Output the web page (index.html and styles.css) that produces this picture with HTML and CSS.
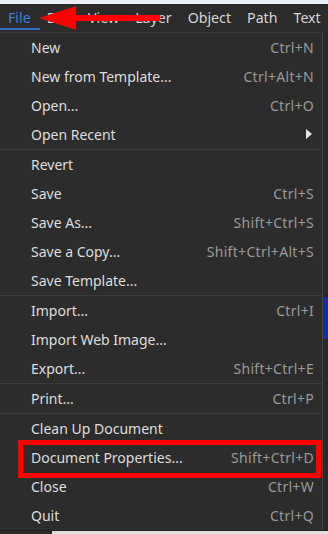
FILE: index.html
```html
<!DOCTYPE html>
<html lang="en">
<head>
  <meta charset="UTF-8">
  <title>File menu</title>
  <link rel="stylesheet" href="styles.css">
</head>
<body>
  <div class="window">
    <div class="top-strip"></div>

    <div class="menubar">
      <span class="menubar-item active">File</span>
      <span class="menubar-item">Edit</span>
      <span class="menubar-item">View</span>
      <span class="menubar-item">Layer</span>
      <span class="menubar-item">Object</span>
      <span class="menubar-item">Path</span>
      <span class="menubar-item">Text</span>
    </div>

    <div class="body-row">
      <ul class="menu">
        <li class="item"><span>New</span><span class="shortcut">Ctrl+N</span></li>
        <li class="item"><span>New from Template...</span><span class="shortcut">Ctrl+Alt+N</span></li>
        <li class="item"><span>Open...</span><span class="shortcut">Ctrl+O</span></li>
        <li class="item"><span>Open Recent</span><span class="submenu-arrow"></span></li>
        <li class="separator"></li>
        <li class="item"><span>Revert</span></li>
        <li class="item"><span>Save</span><span class="shortcut">Ctrl+S</span></li>
        <li class="item"><span>Save As...</span><span class="shortcut">Shift+Ctrl+S</span></li>
        <li class="item"><span>Save a Copy...</span><span class="shortcut">Shift+Ctrl+Alt+S</span></li>
        <li class="item"><span>Save Template...</span></li>
        <li class="separator"></li>
        <li class="item"><span>Import...</span><span class="shortcut">Ctrl+I</span></li>
        <li class="item"><span>Import Web Image...</span></li>
        <li class="item"><span>Export...</span><span class="shortcut">Shift+Ctrl+E</span></li>
        <li class="separator"></li>
        <li class="item"><span>Print...</span><span class="shortcut">Ctrl+P</span></li>
        <li class="separator"></li>
        <li class="item"><span>Clean Up Document</span></li>
        <li class="item"><span>Document Properties...</span><span class="shortcut">Shift+Ctrl+D</span></li>
        <li class="item"><span>Close</span><span class="shortcut">Ctrl+W</span></li>
        <li class="item"><span>Quit</span><span class="shortcut">Ctrl+Q</span></li>
      </ul>
      <div class="side-strip">
        <div class="side-blue"></div>
      </div>
    </div>

    <div class="bottom-strip">
      <div class="bottom-canvas"></div>
    </div>

    <!-- annotations drawn over the screenshot -->
    <svg class="arrow" width="130" height="28" viewBox="0 0 130 28">
      <polygon points="1,13 38,1 38,10 122,10 122,16 38,16 38,25" fill="#ff0000"/>
    </svg>
    <div class="highlight"></div>
  </div>
</body>
</html>
```

FILE: styles.css
```css
html {
  font-size: 14px;
}

body {
  margin: 0;
  background-color: #2b2b2b;
  font-family: 'Noto Sans', 'Open Sans', Arial, sans-serif;
  color: #dedede;
}

.window {
  position: relative;
  width: 328px;
  height: 534px;
  overflow: hidden;
  display: flex;
  flex-direction: column;
}

.top-strip {
  height: 4px;
  background-color: #e9eef2;
}

.menubar {
  height: 28px;
  display: flex;
  align-items: center;
  gap: 16px;
  padding-left: 8px;
  font-size: 14.2px;
  color: #d6d6d6;
  background-color: #2b2b2b;
  white-space: nowrap;
}

.menubar-item {
  position: relative;
  line-height: 28px;
}

.menubar-item.active {
  color: #3c7fd6;
}

.menubar-item.active::after {
  content: "";
  position: absolute;
  left: -8px;
  right: -9px;
  bottom: 2px;
  height: 2px;
  background-color: #2f6fc4;
}

.body-row {
  display: flex;
  flex: 1;
}

.menu {
  list-style: none;
  margin: 0;
  padding: 0;
  width: 323px;
  background-color: #2c2c2c;
  border-top: 1px solid #3a3a3a;
  border-right: 1px solid #474747;
  box-sizing: border-box;
}

.item {
  height: 29px;
  display: flex;
  align-items: center;
  justify-content: space-between;
  padding: 0 8px 0 31px;
  white-space: nowrap;
}

.shortcut {
  color: #9a9a9a;
  letter-spacing: 0.3px;
}

.submenu-arrow {
  width: 0;
  height: 0;
  margin-right: 2px;
  border-top: 5px solid transparent;
  border-bottom: 5px solid transparent;
  border-left: 6px solid #e6e6e6;
}

.separator {
  height: 1px;
  background-color: #3c3c3c;
}

.side-strip {
  flex: 1;
  background-color: #292929;
  padding-top: 265px;
}

.side-blue {
  height: 42px;
  background-color: #0d2fb0;
}

.bottom-strip {
  height: 4px;
  display: flex;
  padding-left: 52px;
  border-top: 1px solid #1e1e1e;
  background-color: #2b2b2b;
}

.bottom-canvas {
  flex: 1;
  background-color: #dcdcdc;
}

.arrow {
  position: absolute;
  left: 38px;
  top: 5px;
}

.highlight {
  position: absolute;
  left: 18px;
  top: 440px;
  width: 293px;
  height: 28px;
  border: 5px solid #ff0000;
}
```
